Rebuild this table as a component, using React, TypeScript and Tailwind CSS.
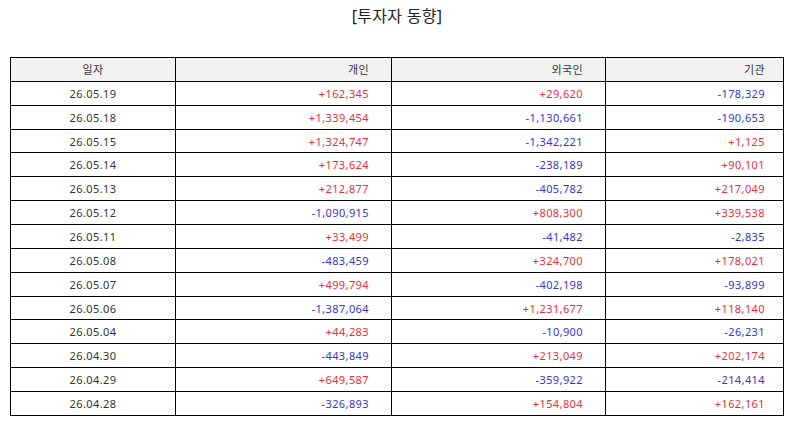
const rows: [string, string, string, string][] = [
  ["26.05.19", "+162,345", "+29,620", "-178,329"],
  ["26.05.18", "+1,339,454", "-1,130,661", "-190,653"],
  ["26.05.15", "+1,324,747", "-1,342,221", "+1,125"],
  ["26.05.14", "+173,624", "-238,189", "+90,101"],
  ["26.05.13", "+212,877", "-405,782", "+217,049"],
  ["26.05.12", "-1,090,915", "+808,300", "+339,538"],
  ["26.05.11", "+33,499", "-41,482", "-2,835"],
  ["26.05.08", "-483,459", "+324,700", "+178,021"],
  ["26.05.07", "+499,794", "-402,198", "-93,899"],
  ["26.05.06", "-1,387,064", "+1,231,677", "+118,140"],
  ["26.05.04", "+44,283", "-10,900", "-26,231"],
  ["26.04.30", "-443,849", "+213,049", "+202,174"],
  ["26.04.29", "+649,587", "-359,922", "-214,414"],
  ["26.04.28", "-326,893", "+154,804", "+162,161"],
]

function Num({ v, pr }: { v: string; pr: string }) {
  const up = v.startsWith("+")
  return (
    <td className={`border border-black text-right ${pr} ${up ? "text-[#e8303a]" : "text-[#3535d0]"}`}>
      {v}
    </td>
  )
}

export default function App() {
  return (
    <div
      className="w-[794px] h-[425px] bg-white text-[#333]"
      style={{ fontFamily: '"Noto Sans", "Noto Sans CJK KR", sans-serif' }}
    >
      <h1 className="pt-[4px] h-[57px] text-center text-[16px] tracking-[0.3px] text-[#222]">[투자자 동향]</h1>
      <div className="px-[10px]">
        <table className="w-full border-collapse border border-black text-[11px] tracking-[0.4px] leading-none">
          <colgroup>
            <col className="w-[165px]" />
            <col className="w-[216px]" />
            <col className="w-[214px]" />
            <col />
          </colgroup>
          <thead>
            <tr className="h-[23.87px] bg-[#f2f2f2]">
              <th className="border border-black font-normal text-center">일자</th>
              <th className="border border-black font-normal text-right pr-[22px]">개인</th>
              <th className="border border-black font-normal text-right pr-[22px]">외국인</th>
              <th className="border border-black font-normal text-right pr-[18px]">기관</th>
            </tr>
          </thead>
          <tbody>
            {rows.map(r => (
              <tr key={r[0]} className="h-[23.87px]">
                <td className="border border-black text-center">{r[0]}</td>
                <Num v={r[1]} pr="pr-[22px]" />
                <Num v={r[2]} pr="pr-[22px]" />
                <Num v={r[3]} pr="pr-[18px]" />
              </tr>
            ))}
          </tbody>
        </table>
      </div>
    </div>
  )
}
